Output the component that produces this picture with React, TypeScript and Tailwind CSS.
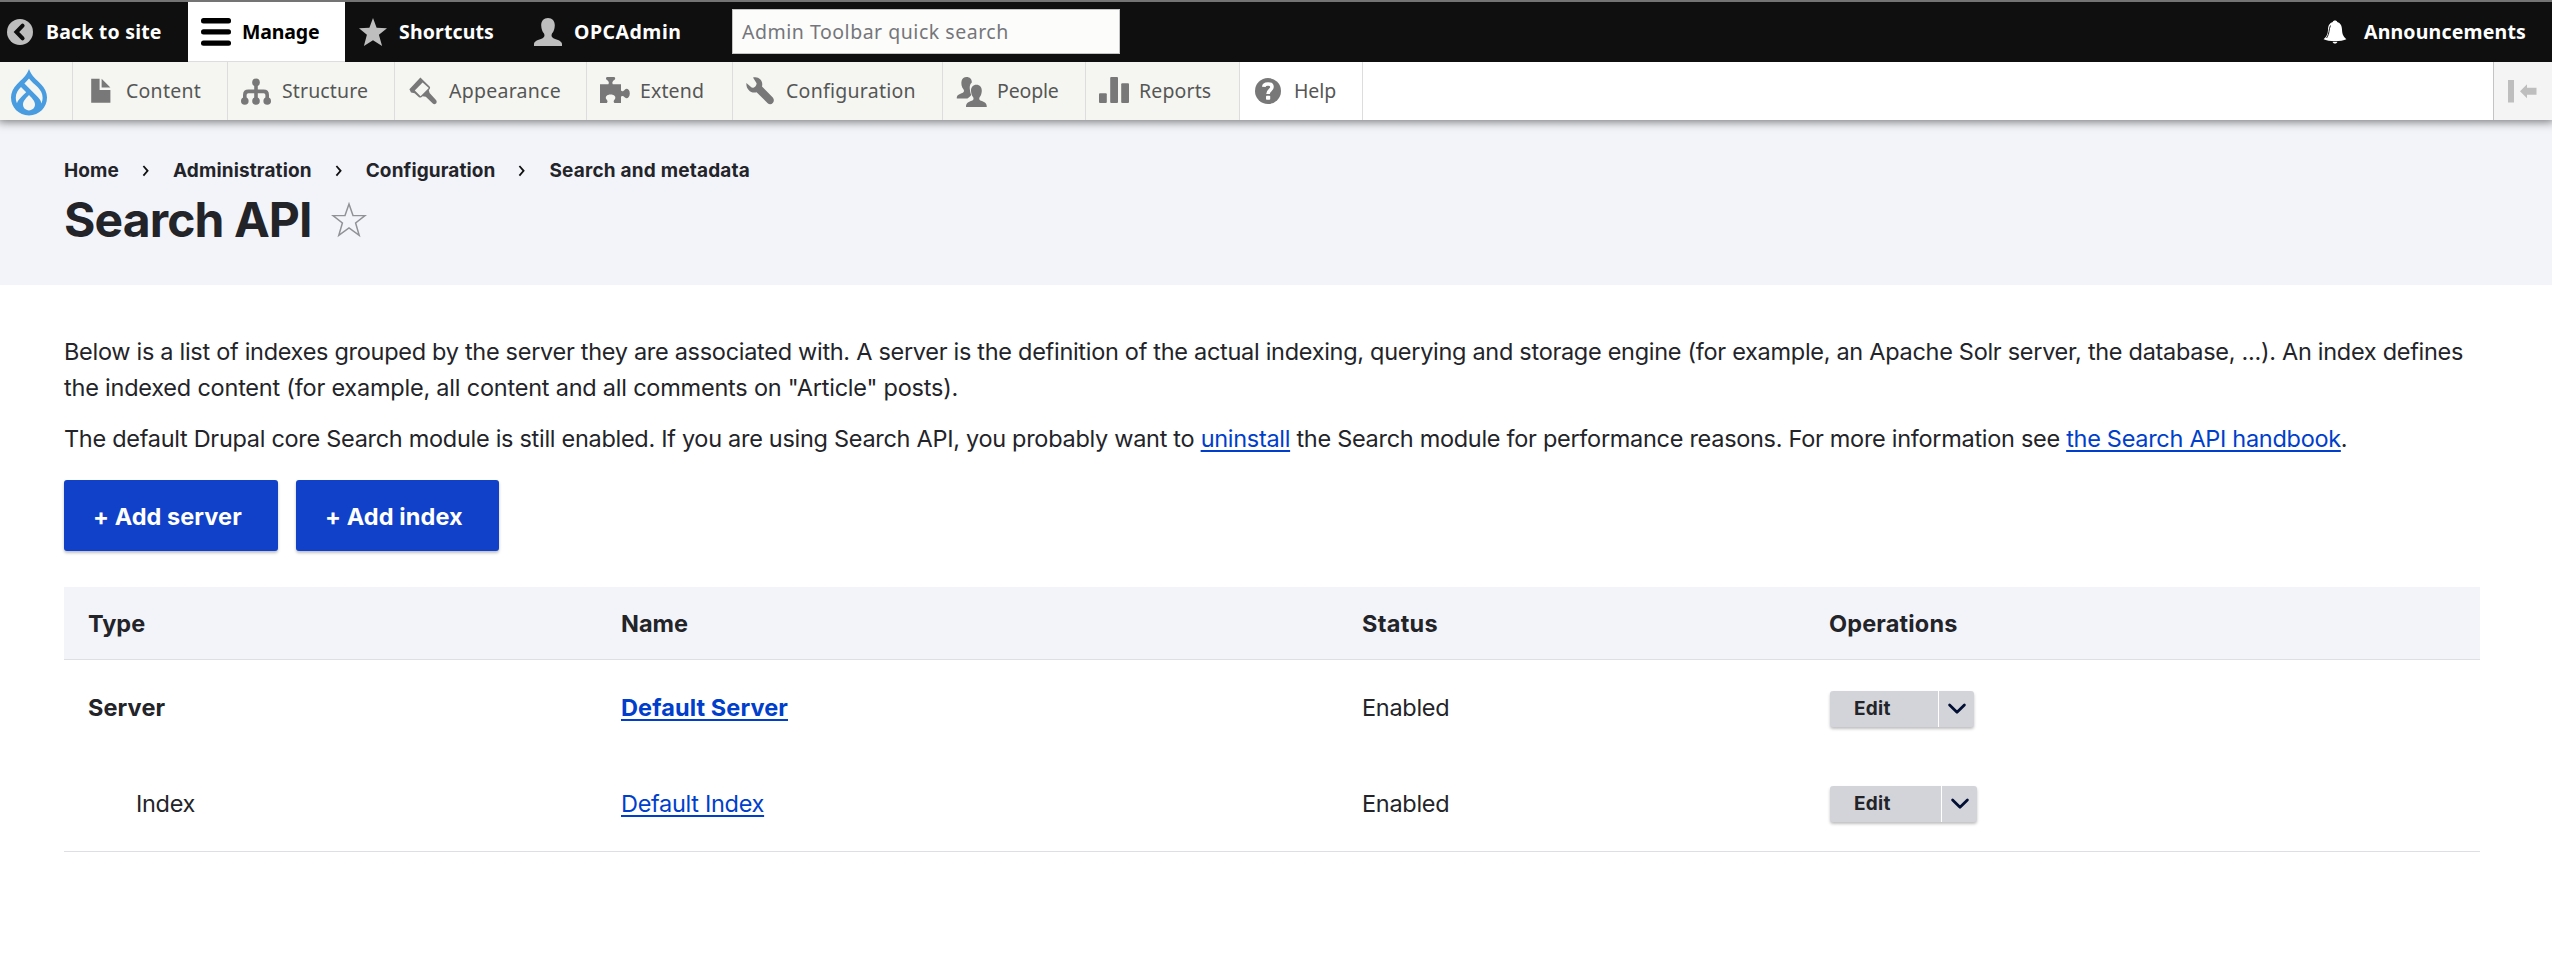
import type { ReactNode } from "react";

function Icon({ children, className, w = 30, h = 30 }: { children: ReactNode; className?: string; w?: number; h?: number }) {
  return (
    <svg width={w} height={h} viewBox={`0 0 ${w} ${h}`} className={`shrink-0 ${className ?? ""}`} aria-hidden="true">
      {children}
    </svg>
  );
}

const BackIcon = () => (
  <Icon className="text-[#bebebe]">
    <circle cx="15" cy="15" r="13" fill="currentColor" />
    <path d="M17.6 8.6 L11.4 15 L17.6 21.4" fill="none" stroke="#0f0f0f" strokeWidth="4" strokeLinecap="round" />
  </Icon>
);
const MenuIcon = () => (
  <Icon className="text-black">
    <rect x="0" y="1" width="30" height="5.4" rx="2.5" fill="currentColor" />
    <rect x="0" y="12.2" width="30" height="5.4" rx="2.5" fill="currentColor" />
    <rect x="0" y="23.4" width="30" height="5.4" rx="2.5" fill="currentColor" />
  </Icon>
);
const StarIcon = () => (
  <Icon className="text-[#bebebe]">
    <path d="M15 1 L18.6 10.8 L29 11.2 L20.9 17.8 L24.1 28.9 L15 23.2 L5.9 28.9 L8.9 17.8 L1 11.2 L11.4 10.8 Z" fill="currentColor" />
  </Icon>
);
const PersonIcon = () => (
  <Icon className="text-[#bebebe]">
    <path d="M15 1 C19.2 1 22 4 21.8 8.6 C21.6 12 20.8 14.6 19 16.6 C18 18.8 18.6 20.4 20.4 21.2 C23 22.4 29 23.6 29 27 L29 28.9 L1 28.9 L1 27 C1 23.6 7 22.4 9.6 21.2 C11.4 20.4 12 18.8 11 16.6 C9.2 14.6 8.4 12 8.2 8.6 C8 4 10.8 1 15 1 Z" fill="currentColor" />
  </Icon>
);
const BellIcon = () => (
  <Icon w={24} h={26} className="text-white">
    <path d="M9.8 3 C9.8 1 14.2 1 14.2 3 C17.6 4 18.9 7 19 10.5 C19.2 14.5 19.8 17 23.4 20.2 C21 21.6 16.5 22 12 22 C7.5 22 3 21.6 .6 20.2 C4.2 17 4.8 14.5 5 10.5 C5.1 7 6.4 4 9.8 3 Z" fill="currentColor" />
    <path d="M9.6 22.8 H14.4 C14.2 25.2 9.8 25.2 9.6 22.8 Z" fill="currentColor" />
    <path d="M7.5 6.5 C5.6 10 6.8 14.5 3.6 19" stroke="#0f0f0f" strokeWidth=".9" fill="none" />
  </Icon>
);
const DrupalIcon = () => (
  <Icon w={36} h={47}>
    <path
      d="M18 0 C20.5 7 25.5 10.5 30 15.2 C33.8 19.2 36 23.5 36 28.6 C36 38.6 28.2 46.5 18 46.5 C7.8 46.5 0 38.6 0 28.6 C0 23.5 2.2 19.2 6 15.2 C10.5 10.5 15.5 7 18 0 Z"
      fill="#489cdf"
    />
    <path d="M18 9.6 C16.6 11.4 15 13 13.4 14.6 L26.8 28 C29 30.4 30.2 32.2 30.2 34.4 C31.4 32.6 31.6 30.8 31.6 28.6 C31.6 24.4 29.4 21 26.8 18.3 C23.6 15.2 20.4 12.8 18 9.6 Z" fill="#f5f6f1" />
    <path d="M10 18 C7 21 4.8 24.4 4.8 28.6 C4.8 31 5.2 32.6 6 34.2 C6.8 31.2 10.8 27.2 15.2 23.2 Z" fill="#f5f6f1" />
    <path d="M18 26 C15 29.2 12 32 12 35.6 C12 39 14.6 41.4 18 41.4 C21.4 41.4 24 39 24 35.6 C24 32 21 29.2 18 26 Z" fill="#f5f6f1" />
  </Icon>
);
const FileIcon = () => (
  <Icon>
    <path d="M5.2 2.8 H13.6 V14 H24.4 V26.8 H5.2 Z" fill="currentColor" />
    <path d="M15.6 2.8 L24.4 11.6 H15.6 Z" fill="currentColor" />
  </Icon>
);
const StructureIcon = () => (
  <Icon>
    <g fill="currentColor">
      <circle cx="15" cy="6.4" r="3.8" />
      <circle cx="3.8" cy="25" r="3.8" />
      <circle cx="15" cy="25" r="3.8" />
      <circle cx="26.2" cy="25" r="3.8" />
    </g>
    <path d="M15 6 V24 M3.8 24 V19 Q3.8 15.4 7.4 15.4 H22.6 Q26.2 15.4 26.2 19 V24" fill="none" stroke="currentColor" strokeWidth="3.6" />
  </Icon>
);
const BrushIcon = () => (
  <Icon>
    <path d="M1.4 13.2 L12.4 1.4 L21.8 10.8 C22.6 12 21.8 13 20.8 14.2 L21.6 17 L28 24 C30 26.4 27.2 29.6 24.8 27.6 L17.8 20.8 L14.6 20.2 C13.2 21.6 12.2 22 11 21.2 L6.6 17.2 L3 16.4 Z" fill="currentColor" />
    <path d="M6.8 14.6 L14.6 6.6 L20.8 12 L12.6 20.2 Z" fill="#f5f6f1" />
  </Icon>
);
const PuzzleIcon = () => (
  <Icon>
    <path
      d="M0 8.2 H8.4 C9.4 6.4 8.8 5.4 6.6 3.8 C5.6 3 5.8 1 7.4 1 H13.8 C15.4 1 15.6 3 14.6 3.8 C12.4 5.4 11.8 6.4 12.8 8.2 H21 V14.6 C22.4 16 23.6 15 25 13.4 C26.8 12 29.8 13.4 29.8 17.4 C29.8 21.6 26.8 23 25 21.6 C23.6 20 22.4 19.4 21 20.6 V27 H14.4 C13 25.4 13.8 24.4 15 23 C16.2 20.6 14.4 18.4 10.6 18.4 C6.8 18.4 5 20.6 6.2 23 C7.4 24.4 8.2 25.4 6.8 27 H0 Z"
      fill="currentColor"
    />
  </Icon>
);
const WrenchIcon = () => (
  <Icon>
    <path d="M8 1.6 C13 -.2 18.6 4 17 10.6 L27.8 21.4 C31 25.2 26.4 30.6 22.4 27 L11.6 16.2 C6 17.8 .8 13.2 1.4 7 L6.6 11.6 C9 12.4 11.6 9.8 11.6 7.2 Z" fill="currentColor" />
  </Icon>
);
const PeopleIcon = () => (
  <Icon w={31} h={31}>
    <path d="M10.6 1 C13.8 1 16 3.2 15.8 6.4 C13.6 8.4 13.4 11 14 14.4 C14.4 16.4 14.6 17.8 15.2 18.8 C15 20.4 12.6 21.4 11.4 22.6 H.8 C.4 18.6 4 18 6.4 17 C8 16.4 8.4 15 7.6 13.6 C5.4 11 5 7.4 5.6 4.8 C6.2 2.4 8 1 10.6 1 Z" fill="currentColor" />
    <path d="M20.4 8.8 C23.8 8.8 26 11.4 25.8 15 C25.6 17.6 25 19.6 23.6 21.2 C22.8 23 23.4 24.2 25 24.8 C27.4 25.8 31 26.6 30.8 31 H10 C9.8 26.6 13.4 25.8 15.8 24.8 C17.4 24.2 18 23 17.2 21.2 C15.8 19.6 15.2 17.6 15 15 C14.8 11.4 17 8.8 20.4 8.8 Z" fill="currentColor" />
  </Icon>
);
const ReportsIcon = () => (
  <Icon>
    <g fill="currentColor">
      <rect x="0" y="17.2" width="7.8" height="9.8" rx="1" />
      <rect x="11.2" y="1" width="7.8" height="26" rx="1" />
      <rect x="22.2" y="7.2" width="7.8" height="19.8" rx="1" />
    </g>
  </Icon>
);
const HelpIcon = () => (
  <Icon>
    <circle cx="15" cy="15" r="13" fill="currentColor" />
    <path d="M10.8 10.8 C11 7.4 18.8 6.6 19 11 C19 14.2 15 14 15 18" fill="none" stroke="#fff" strokeWidth="3.6" />
    <rect x="13" y="19.8" width="4.2" height="4" rx=".8" fill="#fff" />
  </Icon>
);

function TopItem({ icon, label, className }: { icon: ReactNode; label: string; className: string }) {
  return (
    <a className={`flex h-full items-center font-bold whitespace-nowrap ${className}`}>
      {icon}
      <span>{label}</span>
    </a>
  );
}

const menu = [
  { label: "Content", icon: <FileIcon />, cls: "w-[155px] pl-[13px] gap-[10px] tracking-[0.24px]" },
  { label: "Structure", icon: <StructureIcon />, cls: "w-[167px] pl-[13px] gap-[11px] tracking-[0.12px]" },
  { label: "Appearance", icon: <BrushIcon />, cls: "w-[192px] pl-[13px] gap-[11px] tracking-[0.26px]" },
  { label: "Extend", icon: <PuzzleIcon />, cls: "w-[146px] pl-[13px] gap-[10px] tracking-[0.13px]" },
  { label: "Configuration", icon: <WrenchIcon />, cls: "w-[210px] pl-[12px] gap-[11px] tracking-[0.26px]" },
  { label: "People", icon: <PeopleIcon />, cls: "w-[143px] pl-[13px] gap-[10px] tracking-[-0.15px]" },
  { label: "Reports", icon: <ReportsIcon />, cls: "w-[154px] pl-[13px] gap-[10px] tracking-[0.14px]" },
  { label: "Help", icon: <HelpIcon />, cls: "w-[123px] pl-[13px] gap-[11px] tracking-[-0.1px] bg-white" },
];

function Toolbar() {
  return (
    <header className="relative z-10 font-['Noto_Sans',sans-serif] text-[19.5px] leading-[30px]">
      <div className="flex h-[62px] items-stretch border-t-2 border-[#747474] bg-[#0f0f0f] text-white">
        <TopItem icon={<BackIcon />} label="Back to site" className="w-[188px] gap-[11px] pl-[5px] tracking-[0.2px]" />
        <TopItem icon={<MenuIcon />} label="Manage" className="w-[157px] gap-[11px] border-b border-[#dddddd] bg-white pl-[13px] tracking-[-0.15px] text-black" />
        <TopItem icon={<StarIcon />} label="Shortcuts" className="w-[175px] gap-[11px] pl-[13px] tracking-[0.14px]" />
        <TopItem icon={<PersonIcon />} label="OPCAdmin" className="w-[212px] gap-[11px] pl-[13px] tracking-[0.5px]" />
        <div className="mt-[7px] flex h-[45px] w-[388px] items-center border border-[#c4c4c4] bg-[#fcfcfa] pl-[9px] tracking-[0.52px] text-[#75767b]">
          Admin Toolbar quick search
        </div>
        <TopItem icon={<BellIcon />} label="Announcements" className="ml-auto gap-[17px] pr-[26px] tracking-[0.18px]" />
      </div>
      <nav className="flex h-[58px] bg-white text-[#565656] shadow-[0_0_9px_2px_rgba(0,0,0,0.5)] [clip-path:inset(0_0_-14px_0)]">
        <a className="flex w-[73px] items-center border-r border-[#dddddd] bg-[#f5f6f1] pt-[3px] pl-[11px]">
          <DrupalIcon />
        </a>
        {menu.map((m) => (
          <a key={m.label} className={`flex items-center border-r border-[#dddddd] whitespace-nowrap ${m.cls} ${m.label === "Help" ? "" : "bg-[#f5f6f1]"}`}>
            <span className="text-[#787878]">{m.icon}</span>
            <span>{m.label}</span>
          </a>
        ))}
        <button className="ml-auto flex w-[59px] items-center border-l border-[#c4c4c4] bg-[#f4f4f4] pl-[14px] text-[#bebebe]">
          <Icon>
            <path d="M0 4 H6 V26.5 H0 Z M12 15.2 L19 8.2 V11.8 H28.5 V18.8 H19 V22.2 Z" fill="currentColor" />
          </Icon>
        </button>
      </nav>
    </header>
  );
}

const crumbs = [
  { label: "Home", cls: "tracking-[0.12px]" },
  { label: "Administration", cls: "tracking-[0.13px]" },
  { label: "Configuration", cls: "tracking-[0.11px]" },
  { label: "Search and metadata", cls: "tracking-[0.19px]" },
];

function DropButton({ className }: { className: string }) {
  return (
    <div className={`flex h-9 overflow-hidden rounded-[3px] bg-[#d3d4d9] shadow-[0_2px_3px_rgba(0,0,0,0.25)] ${className}`}>
      <button className="flex-1 border-r border-white pl-6 text-left text-[19px] leading-[34px] font-bold tracking-[0.3px]">Edit</button>
      <button className="flex w-[35px] items-center justify-center">
        <svg width="20" height="12" viewBox="0 0 20 12" fill="none" stroke="#000f33" strokeWidth="2.8" strokeLinecap="round" strokeLinejoin="round">
          <path d="M2.6 2 L10 9.2 L17.4 2" />
        </svg>
      </button>
    </div>
  );
}

const link = "text-[#003ecc] underline decoration-2 underline-offset-[3px]";

export default function App() {
  return (
    <div className="min-h-[978px] w-[2552px] overflow-hidden bg-white font-['Inter',sans-serif] text-[23.5px] leading-9 text-[#232429]">
      <Toolbar />
      <div className="h-[165px] bg-[#f3f4f9] pt-[37px] pl-16">
        <nav className="flex h-[28px] items-center text-[19px] leading-[28px] font-bold">
          {crumbs.map((c, i) => (
            <span key={c.label} className="flex items-center">
              {i > 0 && (
                <svg width="8" height="12" viewBox="0 0 8 12" className="mr-[23px] ml-[23px]" fill="none" stroke="#111" strokeWidth="1.8">
                  <path d="M1.4 1 L5.6 5.8 L1.4 10.6" />
                </svg>
              )}
              <span className={c.cls}>{c.label}</span>
            </span>
          ))}
        </nav>
        <div className="flex items-center pt-[4px]">
          <h1 className="w-[267px] text-[48px] leading-[62px] font-bold tracking-[-0.9px] whitespace-nowrap">Search API</h1>
          <svg width="36" height="36" viewBox="0 0 36 36" fill="none" stroke="#919297" strokeWidth="1.5">
            <path d="M18 2 L22 13.4 L34 13.6 L24.6 21 L28.2 33.4 L18 26 L7.8 33.4 L11.4 21 L2 13.6 L14 13.4 Z" />
          </svg>
        </div>
      </div>
      <main className="px-16 pr-[72px] pt-[49px]">
        <p className="tracking-[-0.295px] whitespace-nowrap">
          Below is a list of indexes grouped by the server they are associated with. A server is the definition of the actual indexing, querying and storage engine (for example, an Apache Solr server, the database, ...). An index defines
          <br />
          <span className="tracking-[-0.22px]">the indexed content (for example, all content and all comments on "Article" posts).</span>
        </p>
        <p className="mt-[15px] tracking-[-0.295px] whitespace-nowrap">
          The default Drupal core Search module is still enabled. If you are using Search API, you probably want to <a className={link}>uninstall</a> the Search module for performance reasons. For more information see{" "}
          <a className={link}>the Search API handbook</a>.
        </p>
        <div className="mt-[23px] flex gap-[18px] font-bold text-white">
          <button className="h-[71px] w-[214px] rounded-[3px] bg-[#1140c9] pt-[2px] pl-[29px] text-left tracking-[0.06px] shadow-[0_2px_3px_rgba(0,0,0,0.25)]">+ Add server</button>
          <button className="h-[71px] w-[203px] rounded-[3px] bg-[#1140c9] pt-[2px] pl-[29px] text-left tracking-[0.1px] shadow-[0_2px_3px_rgba(0,0,0,0.25)]">+ Add index</button>
        </div>
        <div className="mt-[36px] border-b border-[#dedfe4]">
          <div className="grid h-[73px] grid-cols-[533px_741px_467px_1fr] items-center border-b border-[#dedfe4] bg-[#f3f4f9] pt-[2px] pl-6 font-bold">
            <span>Type</span>
            <span>Name</span>
            <span className="tracking-[0.3px]">Status</span>
            <span className="tracking-[0.15px]">Operations</span>
          </div>
          <div className="grid h-[96px] grid-cols-[533px_741px_468px_1fr] items-center pl-6">
            <span className="font-bold tracking-[0.1px]">Server</span>
            <span className="font-bold tracking-[0.1px]">
              <a className={link}>Default Server</a>
            </span>
            <span className="tracking-[-0.3px]">Enabled</span>
            <DropButton className="mt-[1px] w-[144px]" />
          </div>
          <div className="grid h-[95px] grid-cols-[533px_741px_468px_1fr] items-center pl-6 tracking-[-0.3px]">
            <span className="pl-[48px]">Index</span>
            <span>
              <a className={link}>Default Index</a>
            </span>
            <span>Enabled</span>
            <DropButton className="w-[147px]" />
          </div>
        </div>
      </main>
    </div>
  );
}
